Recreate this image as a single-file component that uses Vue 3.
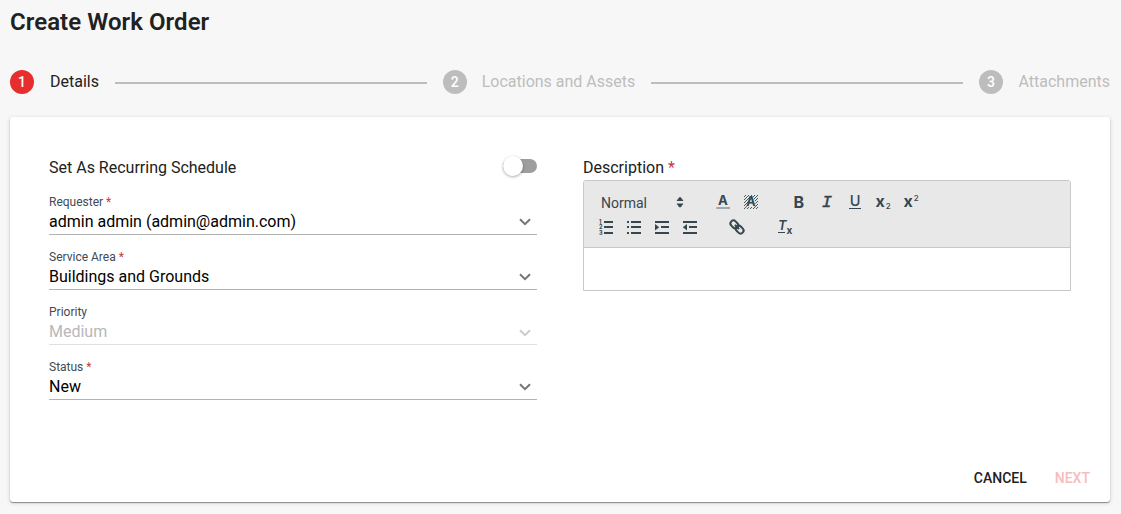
<script setup>
import { ref, reactive } from 'vue';

const steps = [
    { id: 1, title: 'Details' },
    { id: 2, title: 'Locations and Assets' },
    { id: 3, title: 'Attachments' },
]
const currentStep = ref(1);
const recurring = ref(false);

const fields = reactive([
    { name: 'Requester', value: 'admin admin (admin@admin.com)', required: true, disabled: false },
    { name: 'Service Area', value: 'Buildings and Grounds', required: true, disabled: false },
    { name: 'Priority', value: 'Medium', required: false, disabled: true },
    { name: 'Status', value: 'New', required: true, disabled: false },
])
</script>
<template>
    <div class="page">
        <h1>Create Work Order</h1>

        <div class="stepper">
            <template v-for="(step, index) in steps" :key="step.id">
                <div v-if="index > 0" class="step-line"></div>
                <div :class="currentStep == step.id ? 'step active' : 'step'">
                    <span class="step-number">{{ step.id }}</span>
                    <span class="step-title">{{ step.title }}</span>
                </div>
            </template>
        </div>

        <div class="card">
            <div class="columns">
                <div class="column">
                    <div class="recurring">
                        <span>Set As Recurring Schedule</span>
                        <div @click="recurring = !recurring" :class="recurring ? 'switch on' : 'switch'">
                            <span class="thumb"></span>
                        </div>
                    </div>
                    <div v-for="field in fields" :key="field.name" :class="field.disabled ? 'field disabled' : 'field'">
                        <label>{{ field.name }}<span v-if="field.required" class="required"> *</span></label>
                        <div class="select">
                            <span>{{ field.value }}</span>
                            <svg class="chevron" width="12" height="8" viewBox="0 0 12 8">
                                <path d="M1 1.2 L6 6.2 L11 1.2" />
                            </svg>
                        </div>
                    </div>
                </div>

                <div class="column">
                    <div class="description-label">Description<span class="required"> *</span></div>
                    <div class="editor">
                        <div class="toolbar">
                            <div class="toolbar-row">
                                <div class="picker">
                                    <span>Normal</span>
                                    <svg viewBox="0 0 18 18">
                                        <path class="fill" d="M5.5 8 L8.2 4.2 H9.8 L12.5 8 Z M5.5 10.5 L8.2 14.3 H9.8 L12.5 10.5 Z" />
                                    </svg>
                                </div>
                                <div class="group">
                                    <button>
                                        <svg viewBox="0 0 18 18">
                                            <text x="9" y="11.5" font-size="13.2" text-anchor="middle">A</text>
                                            <path class="faded" d="M2.3 15 H16" />
                                        </svg>
                                    </button>
                                    <button>
                                        <svg viewBox="0 0 18 18">
                                            <path class="hatch" d="M2 4 L4 2 M2 7 L7 2 M2 10 L10 2 M2 13 L13 2 M2 16 L5.5 12.5 M11.5 6.5 L16 2 M5 16 L7 14 M13 8 L16 5 M8 16 L10 14 M13.5 10.5 L16 8 M11 16 L16 11 M14 16 L16 14" />
                                            <text x="9" y="13.2" font-size="12.5" text-anchor="middle">A</text>
                                        </svg>
                                    </button>
                                </div>
                                <div class="group last">
                                    <button>
                                        <svg viewBox="0 0 18 18">
                                            <text x="3.5" y="15" font-size="16">B</text>
                                        </svg>
                                    </button>
                                    <button>
                                        <svg viewBox="0 0 18 18">
                                            <text class="italic" x="3.8" y="14.4" font-size="17">I</text>
                                        </svg>
                                    </button>
                                    <button>
                                        <svg viewBox="0 0 18 18">
                                            <text class="underline" x="9" y="13.2" font-size="14.5" text-anchor="middle">U</text>
                                            <path class="thin" d="M3 15.5 H15" />
                                        </svg>
                                    </button>
                                    <button>
                                        <svg viewBox="0 0 18 18">
                                            <text x="1.6" y="14" font-size="16">x</text>
                                            <text class="script" x="11.8" y="16" font-size="8">2</text>
                                        </svg>
                                    </button>
                                    <button>
                                        <svg viewBox="0 0 18 18">
                                            <text x="1.6" y="14" font-size="16">x</text>
                                            <text class="script" x="11.8" y="8" font-size="8">2</text>
                                        </svg>
                                    </button>
                                </div>
                            </div>
                            <div class="toolbar-row">
                                <div class="group">
                                    <button>
                                        <svg viewBox="0 0 18 18">
                                            <path class="line" d="M7 4 H16 M7 9 H16 M7 15 H16" />
                                            <text x="2" y="5.5" font-size="5.5">1</text>
                                            <text x="2" y="11" font-size="5.5">2</text>
                                            <text x="2" y="16.5" font-size="5.5">3</text>
                                        </svg>
                                    </button>
                                    <button>
                                        <svg viewBox="0 0 18 18">
                                            <path class="line" d="M6 4 H16 M6 9 H16 M6 15 H16 M2 4 H4 M2 9 H4 M2 15 H4" />
                                        </svg>
                                    </button>
                                    <button>
                                        <svg viewBox="0 0 18 18">
                                            <path class="line" d="M2 4 H16 M2 15 H16 M8 9 H16" />
                                            <path class="fill" d="M2 6 L6.2 9.2 L2 12.4 Z" />
                                        </svg>
                                    </button>
                                    <button>
                                        <svg viewBox="0 0 18 18">
                                            <path class="line" d="M2 4 H16 M2 15 H16 M8 9 H16" />
                                            <path class="fill" d="M6 6 L1.8 9.2 L6 12.4 Z" />
                                        </svg>
                                    </button>
                                </div>
                                <div class="group">
                                    <button>
                                        <svg viewBox="0 0 18 18">
                                            <g class="link" transform="rotate(45 9 9)">
                                                <rect x="1" y="6" width="8.6" height="6" rx="3" />
                                                <rect x="8.4" y="6" width="8.6" height="6" rx="3" />
                                                <path d="M6 9 H12" />
                                            </g>
                                        </svg>
                                    </button>
                                </div>
                                <div class="group last">
                                    <button>
                                        <svg viewBox="0 0 18 18">
                                            <text class="clean" x="2" y="12.4" font-size="13">T</text>
                                            <path class="thin" d="M2 14.5 H9" />
                                            <text x="10.4" y="16" font-size="10">x</text>
                                        </svg>
                                    </button>
                                </div>
                            </div>
                        </div>
                        <div class="editor-body" contenteditable="true"></div>
                    </div>
                </div>
            </div>

            <div class="actions">
                <button class="cancel-button">CANCEL</button>
                <button class="next-button" disabled>NEXT</button>
            </div>
        </div>
    </div>
</template>
<style>
body {
    background-color: #f7f7f7;
}
</style>
<style scoped>
.page {
    box-sizing: border-box;
    height: 514px;
    padding: 0 11px 12px 10px;
    display: flex;
    flex-direction: column;
    background-color: #f7f7f7;
    font-family: Roboto, "Liberation Sans", sans-serif;
    font-size: 16px;
    color: #212121;
}

h1 {
    margin: 6px 0 32px;
    font-size: 24px;
    line-height: 32px;
    font-weight: 600;
    letter-spacing: 0.05px;
}

.stepper {
    display: flex;
    align-items: center;
    height: 24px;
    margin-bottom: 23px;
}

.step {
    display: flex;
    align-items: center;
    gap: 15px;
    color: #bdbdbd;
}

.step.active {
    gap: 16px;
    color: #212121;
}

.step:last-child {
    gap: 15.5px;
}

.step-title {
    padding-bottom: 2px;
}

.step-number {
    width: 24px;
    height: 24px;
    border-radius: 50%;
    background-color: #bdbdbd;
    color: #ffffff;
    font-size: 14px;
    line-height: 25px;
    font-weight: 500;
    text-align: center;
}

.step.active .step-number {
    background-color: #e62e2e;
}

.step-line {
    flex: 1;
    height: 2px;
    margin: 2px 16px 0;
    background-color: #bdbdbd;
}

.card {
    flex: 1;
    box-sizing: border-box;
    padding: 39px 39px 0;
    display: flex;
    flex-direction: column;
    background-color: #ffffff;
    border-radius: 3px;
    box-shadow: 0 1px 1px rgba(0, 0, 0, 0.38), 0 1px 4px rgba(0, 0, 0, 0.16);
}

.columns {
    display: grid;
    grid-template-columns: 488px 488px;
    gap: 46px;
}

.recurring {
    display: flex;
    justify-content: space-between;
    align-items: center;
    height: 22px;
    margin-bottom: 16px;
}

.switch {
    width: 34px;
    height: 14px;
    margin-bottom: 3px;
    display: flex;
    align-items: center;
    border-radius: 7px;
    background-color: #9e9e9e;
    cursor: pointer;
}

.thumb {
    width: 20px;
    height: 20px;
    border-radius: 50%;
    background-color: #ffffff;
    box-shadow: 0 1px 3px rgba(0, 0, 0, 0.35);
}

.switch.on .thumb {
    margin-left: 14px;
}

.field {
    height: 55px;
}

.field label {
    display: block;
    font-size: 12px;
    line-height: 16px;
    color: #424a55;
}

.required {
    color: #c43c3c;
}

.select {
    display: flex;
    justify-content: space-between;
    align-items: center;
    height: 24px;
    line-height: 24px;
    color: #000000;
    border-bottom: 1px solid #b3b3b3;
}

.chevron {
    margin: 0 6px 0 0;
    fill: none;
    stroke: #757575;
    stroke-width: 2;
}

.disabled .select {
    color: #b8b8b8;
    border-bottom-color: #e0e0e0;
}

.disabled .chevron {
    margin-top: 2px;
    stroke: #cccccc;
}

.description-label {
    height: 24px;
    line-height: 24px;
}

.editor {
    box-sizing: border-box;
    height: 111px;
    border: 1px solid #c8c8c8;
    border-radius: 3px 3px 0 0;
}

.toolbar {
    box-sizing: border-box;
    height: 67px;
    padding: 9px 8px 8px;
    display: flex;
    flex-direction: column;
    gap: 1px;
    background-color: #e8e8e8;
    border-bottom: 1px solid #c8c8c8;
    border-radius: 2px 2px 0 0;
}

.toolbar-row {
    display: flex;
    gap: 19px;
}

.picker {
    box-sizing: border-box;
    width: 98px;
    height: 24px;
    padding: 0 1px 0 9px;
    display: flex;
    align-items: center;
    justify-content: space-between;
    color: #37474f;
    font-size: 14px;
}

.picker span {
    padding-top: 2px;
}

.group {
    display: flex;
}

.group.last {
    margin-left: 1px;
}

.group button {
    width: 28px;
    height: 24px;
    padding: 3px 5px;
    display: block;
    border: none;
    background: none;
    cursor: pointer;
}

.toolbar svg {
    display: block;
    width: 18px;
    height: 18px;
    overflow: visible;
    color: #37474f;
    fill: none;
    stroke: currentColor;
}

.toolbar text {
    fill: currentColor;
    stroke: none;
    font-family: Inter, Roboto, sans-serif;
    font-weight: 700;
}

.toolbar .italic {
    font-family: "Liberation Mono", monospace;
    font-style: italic;
    font-weight: 400;
    stroke: currentColor;
    stroke-width: 0.5;
}

.toolbar .underline {
    font-weight: 500;
}

.toolbar .script {
    font-weight: 500;
}

.toolbar .clean {
    font-style: italic;
    font-weight: 600;
}

.fill {
    fill: currentColor;
    stroke: none;
}

.line {
    stroke-width: 2;
}

.thin {
    stroke-width: 1;
}

.hatch {
    stroke-width: 0.9;
}

.faded {
    stroke-width: 2;
    opacity: 0.4;
}

.link {
    stroke-width: 2;
}

.editor-body {
    height: 42px;
    outline: none;
}

.actions {
    display: flex;
    justify-content: flex-end;
    gap: 28px;
    margin: auto -19px 14px 0;
}

.actions button {
    padding: 0;
    border: none;
    background: none;
    font-family: inherit;
    font-size: 14px;
    line-height: 20px;
    font-weight: 500;
    cursor: pointer;
}

.cancel-button {
    color: #212121;
}

.actions .next-button {
    color: #f8bcbc;
    cursor: default;
}
</style>
